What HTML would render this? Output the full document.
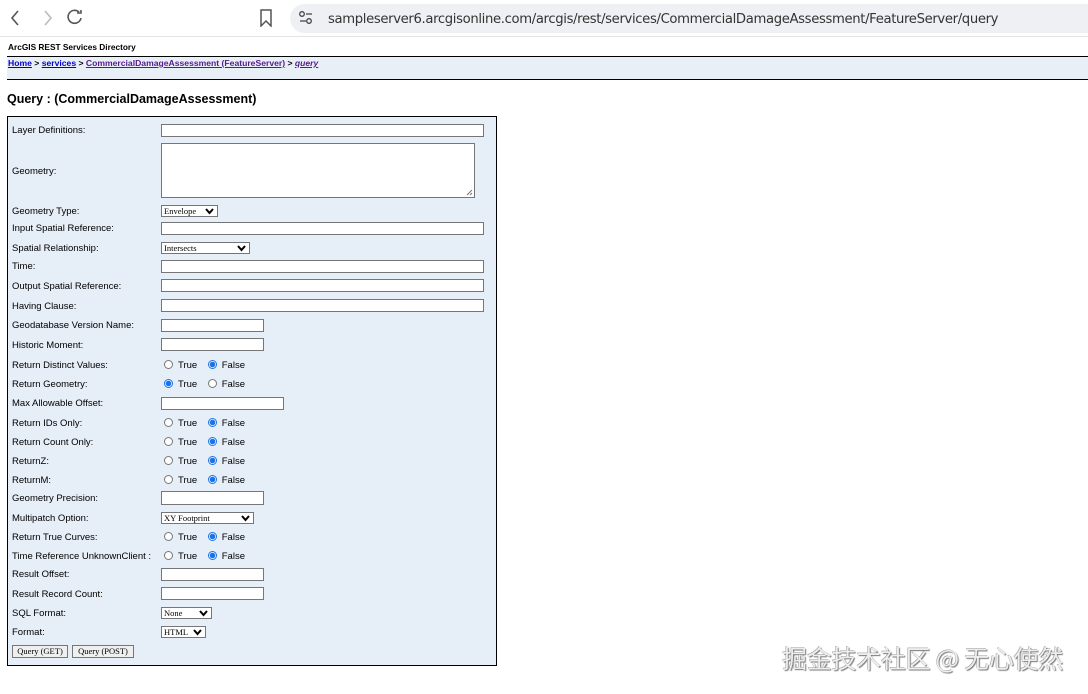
<!DOCTYPE html>
<html><head><meta charset="utf-8"><style>
*{margin:0;padding:0;box-sizing:border-box}
body{width:1088px;height:694px;background:#fff;position:relative;overflow:hidden;font-family:"Liberation Sans",Arial,sans-serif}
.a{position:absolute}
.l{position:absolute;left:12px;font-size:9.5px;color:#000;line-height:12px;margin-top:1px}
.i{position:absolute;left:161px;background:#fff;border:1px solid #767676;height:13px}
.s{position:absolute;left:161px;background:#fff;border:1px solid #767676;height:12px;font-family:"Liberation Serif",serif;font-size:8.5px;line-height:10px;padding-left:2px}
.s svg{position:absolute;right:3px;top:2px}
.r{position:absolute;left:164px;font-size:9.5px;line-height:12px;color:#000;margin-top:1px}
.c{display:inline-block;width:9px;height:9px;border:1px solid #777;border-radius:50%;vertical-align:-1px;margin-right:5px;background:#fff}
.c.on{border:1px solid #1a73e8;background:radial-gradient(circle,#1a73e8 0 2.5px,#fff 3px)}
.b{position:absolute;top:645px;height:13px;border:1px solid #767676;background:#efefef;font-family:"Liberation Serif",serif;font-size:8.5px;line-height:11px;text-align:center}
</style></head><body>
<div class="a" style="left:0;top:0;width:1088px;height:37px;background:#fff;border-bottom:1px solid #e3e3e3"></div>
<svg class="a" style="left:8px;top:9px" width="90" height="18" viewBox="0 0 90 18"><path d="M10 2 L4 9 L10 16" fill="none" stroke="#555" stroke-width="1.6"/><path d="M37 2 L43 9 L37 16" fill="none" stroke="#bbb" stroke-width="1.6"/><path d="M71 3 A6.5 6.5 0 1 0 73 9" fill="none" stroke="#555" stroke-width="1.6"/><path d="M68 3 L72 3 L72 0" fill="none" stroke="#555" stroke-width="1.6" transform="translate(1,1)"/></svg>
<svg class="a" style="left:259px;top:9px" width="14" height="18"><path d="M2 1 H12 V17 L7 12 L2 17 Z" fill="none" stroke="#555" stroke-width="1.5"/></svg>
<div class="a" style="left:290px;top:4px;width:800px;height:29px;background:#eef0f3;border-radius:15px 0 0 15px"></div>
<svg class="a" style="left:298px;top:10px" width="16" height="16"><circle cx="4" cy="4" r="2.3" fill="none" stroke="#444" stroke-width="1.3"/><path d="M8 4 H14 M2 11 H8" stroke="#444" stroke-width="1.3"/><circle cx="11" cy="11" r="2.3" fill="none" stroke="#444" stroke-width="1.3"/></svg>
<div class="a" style="left:328px;top:12px;font-family:'DejaVu Sans',sans-serif;font-size:13.2px;color:#333;letter-spacing:-0.35px;white-space:nowrap">sampleserver6.arcgisonline.com/arcgis/rest/services/CommercialDamageAssessment/FeatureServer/query</div>

<div class="a" style="left:8px;top:42px;font-size:8.3px;font-weight:bold">ArcGIS REST Services Directory</div>
<div class="a" style="left:7px;top:56px;width:1081px;height:24px;background:#e9eff7;border-top:1px solid #000;border-bottom:1px solid #000"></div>
<div class="a" style="left:8px;top:58px;font-size:8.6px;font-weight:bold;white-space:nowrap"><u style="color:#00c">Home</u> &gt; <u style="color:#00c">services</u> &gt; <u style="color:#551a8b">CommercialDamageAssessment (FeatureServer)</u> &gt; <u style="color:#551a8b"><i>query</i></u></div>
<div class="a" style="left:7px;top:92px;font-size:12.5px;font-weight:bold">Query : (CommercialDamageAssessment)</div>

<div class="a" style="left:7px;top:116px;width:490px;height:550px;background:#e6eef7;border:1px solid #000"></div>

<div class="l" style="top:124px">Layer Definitions:</div><div class="i" style="top:124px;width:323px"></div>
<div class="l" style="top:165px">Geometry:</div><div class="i" style="top:143px;width:314px;height:55px"></div>
<svg class="a" style="left:466px;top:189px" width="7" height="7"><path d="M1 6 L6 1 M4 6 L6 4" stroke="#777" stroke-width="1"/></svg>
<div class="l" style="top:205px">Geometry Type:</div><div class="s" style="top:205px;width:57px">Envelope<svg width="9" height="7"><path d="M1 1 L4.5 5 L8 1" fill="none" stroke="#000" stroke-width="2"/></svg></div>
<div class="l" style="top:222px">Input Spatial Reference:</div><div class="i" style="top:222px;width:323px"></div>
<div class="l" style="top:242px">Spatial Relationship:</div><div class="s" style="top:242px;width:89px">Intersects<svg width="9" height="7"><path d="M1 1 L4.5 5 L8 1" fill="none" stroke="#000" stroke-width="2"/></svg></div>
<div class="l" style="top:260px">Time:</div><div class="i" style="top:260px;width:323px"></div>
<div class="l" style="top:280px">Output Spatial Reference:</div><div class="i" style="top:279px;width:323px"></div>
<div class="l" style="top:300px">Having Clause:</div><div class="i" style="top:299px;width:323px"></div>
<div class="l" style="top:319px">Geodatabase Version Name:</div><div class="i" style="top:319px;width:103px"></div>
<div class="l" style="top:339px">Historic Moment:</div><div class="i" style="top:338px;width:103px"></div>
<div class="l" style="top:359px">Return Distinct Values:</div><div class="r" style="top:359px"><span class="c"></span>True&nbsp;&nbsp;&nbsp;&nbsp;<span class="c on"></span>False</div>
<div class="l" style="top:378px">Return Geometry:</div><div class="r" style="top:378px"><span class="c on"></span>True&nbsp;&nbsp;&nbsp;&nbsp;<span class="c"></span>False</div>
<div class="l" style="top:397px">Max Allowable Offset:</div><div class="i" style="top:397px;width:123px"></div>
<div class="l" style="top:417px">Return IDs Only:</div><div class="r" style="top:417px"><span class="c"></span>True&nbsp;&nbsp;&nbsp;&nbsp;<span class="c on"></span>False</div>
<div class="l" style="top:436px">Return Count Only:</div><div class="r" style="top:436px"><span class="c"></span>True&nbsp;&nbsp;&nbsp;&nbsp;<span class="c on"></span>False</div>
<div class="l" style="top:455px">ReturnZ:</div><div class="r" style="top:455px"><span class="c"></span>True&nbsp;&nbsp;&nbsp;&nbsp;<span class="c on"></span>False</div>
<div class="l" style="top:474px">ReturnM:</div><div class="r" style="top:474px"><span class="c"></span>True&nbsp;&nbsp;&nbsp;&nbsp;<span class="c on"></span>False</div>
<div class="l" style="top:492px">Geometry Precision:</div><div class="i" style="top:491px;width:103px;height:14px"></div>
<div class="l" style="top:512px">Multipatch Option:</div><div class="s" style="top:512px;width:93px">XY Footprint<svg width="9" height="7"><path d="M1 1 L4.5 5 L8 1" fill="none" stroke="#000" stroke-width="2"/></svg></div>
<div class="l" style="top:531px">Return True Curves:</div><div class="r" style="top:531px"><span class="c"></span>True&nbsp;&nbsp;&nbsp;&nbsp;<span class="c on"></span>False</div>
<div class="l" style="top:550px">Time Reference UnknownClient :</div><div class="r" style="top:550px"><span class="c"></span>True&nbsp;&nbsp;&nbsp;&nbsp;<span class="c on"></span>False</div>
<div class="l" style="top:568px">Result Offset:</div><div class="i" style="top:568px;width:103px"></div>
<div class="l" style="top:588px">Result Record Count:</div><div class="i" style="top:587px;width:103px"></div>
<div class="l" style="top:607px">SQL Format:</div><div class="s" style="top:607px;width:51px">None<svg width="9" height="7"><path d="M1 1 L4.5 5 L8 1" fill="none" stroke="#000" stroke-width="2"/></svg></div>
<div class="l" style="top:626px">Format:</div><div class="s" style="top:626px;width:45px">HTML<svg width="9" height="7"><path d="M1 1 L4.5 5 L8 1" fill="none" stroke="#000" stroke-width="2"/></svg></div>
<div class="b" style="left:12px;width:56px">Query (GET)</div>
<div class="b" style="left:72px;width:62px">Query (POST)</div>

<div class="a" style="left:782px;top:642px;font-family:'Noto Sans CJK SC',sans-serif;font-size:25px;line-height:32px;color:#eee;text-shadow:1px 1px 1px #777,-0.5px -0.5px 0 #999;white-space:nowrap;letter-spacing:-0.3px">掘金技术社区 @ 无心使然</div>
</body></html>
